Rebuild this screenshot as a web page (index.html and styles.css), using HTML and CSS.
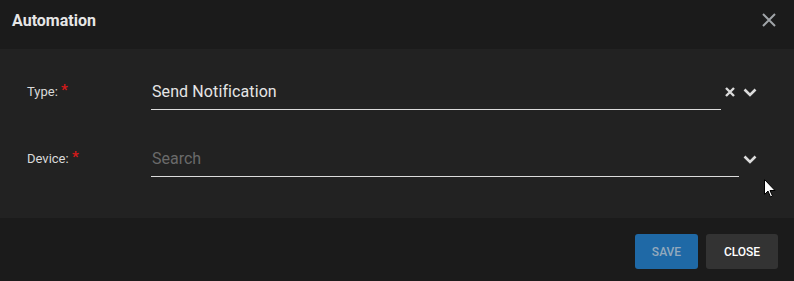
FILE: index.html
```html
<!DOCTYPE html>
<html>
<head>
<meta charset="utf-8">
<link rel="stylesheet" href="styles.css">
</head>
<body>
<div class="dialog">
  <div class="header">
    <div class="title">Automation</div>
    <svg class="close-x" width="14" height="14" viewBox="0 0 14 14"><path d="M1 1L13 13M13 1L1 13" stroke="#a0a4a8" stroke-width="2" fill="none"/></svg>
  </div>
  <div class="body">
    <div class="row">
      <label class="label">Type: <span class="req">*</span></label>
      <div class="field"><span class="value">Send Notification</span></div>
      <div class="icons">
        <span class="ico clear"><svg width="10" height="10" viewBox="0 0 10 10"><path d="M1 1L9 9M9 1L1 9" stroke="#dcdcdc" stroke-width="2.4" fill="none"/></svg></span>
        <span class="ico chev"><svg width="14" height="9" viewBox="0 0 14 9"><path d="M1.5 1.5L7 7L12.5 1.5" stroke="#dcdcdc" stroke-width="2.6" fill="none"/></svg></span>
      </div>
    </div>
    <div class="row">
      <label class="label">Device: <span class="req">*</span></label>
      <div class="field wide"><span class="placeholder">Search</span></div>
      <div class="icons">
        <span class="ico chev"><svg width="14" height="9" viewBox="0 0 14 9"><path d="M1.5 1.5L7 7L12.5 1.5" stroke="#dcdcdc" stroke-width="2.6" fill="none"/></svg></span>
      </div>
    </div>
  </div>
  <div class="footer">
    <button class="btn save">Save</button>
    <button class="btn close">Close</button>
  </div>
  <svg class="cursor" width="13" height="20" viewBox="0 0 13 20"><path d="M0.5 0.5L0.5 15.5L4 12L6.5 18L8.5 17L6 11.5L11 11.5Z" fill="#fff" stroke="#000" stroke-width="1"/></svg>
</div>
</body>
</html>
```
FILE: styles.css
```css
html, body {
  margin: 0;
  padding: 0;
  background: #1b1b1b;
}
body {
  font-family: Roboto, "Liberation Sans", sans-serif;
  color: #e0e0e0;
}
.dialog {
  position: relative;
  width: 794px;
  height: 281px;
  display: flex;
  flex-direction: column;
}
.header {
  height: 49px;
  box-sizing: border-box;
  background: #1b1b1b;
  display: flex;
  justify-content: space-between;
  align-items: flex-start;
  padding: 11px 18px 0 12px;
}
.title {
  font-size: 16px;
  font-weight: 700;
  line-height: 20px;
  color: #e6e6e6;
}
.close-x {
  margin-top: 2px;
}
.body {
  height: 169px;
  box-sizing: border-box;
  background: #222222;
  padding: 25px 33px 0 27px;
  display: flex;
  flex-direction: column;
  gap: 31px;
}
.row {
  display: grid;
  grid-template-columns: 124px 1fr 40px;
  align-items: center;
}
.label {
  font-size: 13px;
  line-height: 16px;
  color: #dadada;
}
.req {
  color: #d11a1a;
  font-size: 15px;
  font-weight: 700;
  line-height: 0;
  vertical-align: 1px;
}
.field {
  height: 36px;
  box-sizing: border-box;
  border-bottom: 1px solid #dcdcdc;
  display: flex;
  align-items: center;
  padding-left: 1px;
  font-size: 16px;
}
.field.wide {
  margin-right: -18px;
}
.value {
  color: #e6e6e6;
  letter-spacing: 0.1px;
}
.placeholder {
  color: #6a6a6a;
}
.icons {
  display: flex;
  justify-content: flex-end;
  align-items: center;
  height: 36px;
}
.ico {
  display: flex;
  align-items: center;
  justify-content: center;
}
.ico.clear {
  width: 18px;
}
.ico.chev {
  width: 22px;
}
.footer {
  flex: 1;
  background: #1b1b1b;
  display: flex;
  justify-content: flex-end;
  align-items: flex-start;
  gap: 8px;
  padding: 16px 16px 0 0;
}
.btn {
  height: 35px;
  border: none;
  border-radius: 3px;
  font-family: Roboto, "Liberation Sans", sans-serif;
  font-size: 12px;
  font-weight: 500;
  text-transform: uppercase;
  cursor: pointer;
}
.btn.save {
  width: 63px;
  background: #1f69a6;
  color: #93a9bd;
}
.btn.close {
  width: 72px;
  background: #333333;
  color: #ffffff;
}
.cursor {
  position: absolute;
  left: 764px;
  top: 179px;
}
```
